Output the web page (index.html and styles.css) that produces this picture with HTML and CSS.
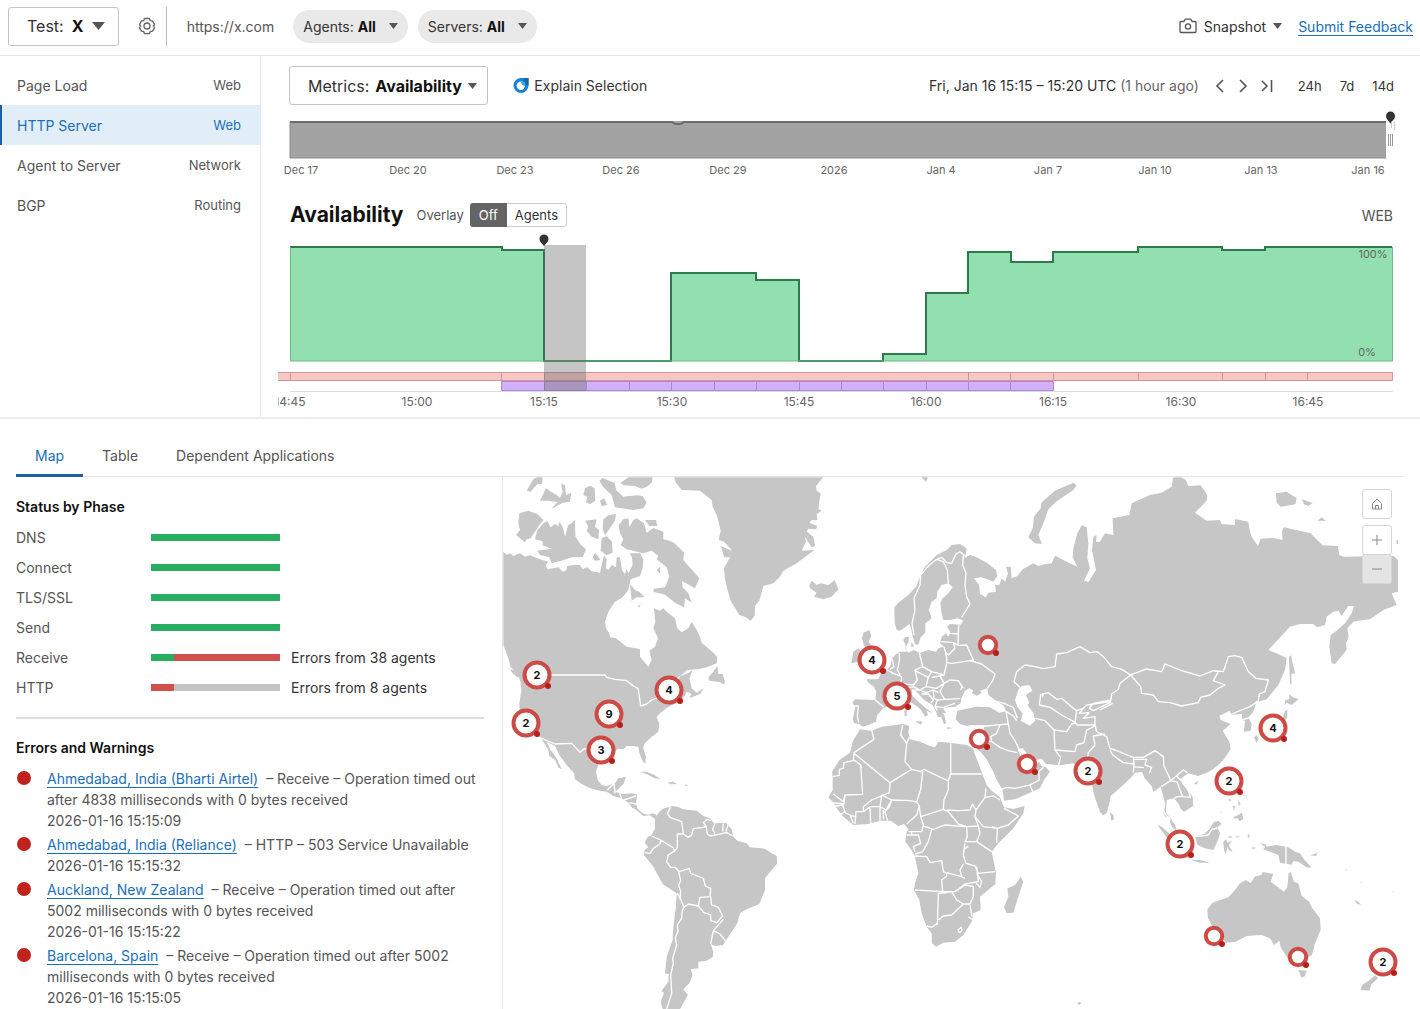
FILE: index.html
```html
<!DOCTYPE html>
<html lang="en">
  <head>
    <meta charset="UTF-8" />
    <meta name="viewport" content="width=device-width, initial-scale=1.0" />
    <title>HTTP Server - X</title>
    <link rel="stylesheet" href="styles.css">
  </head>
  <body>
    <header class="topbar">
      <label class="picker picker-test">
        <span>Test:</span>
        <select><option>X</option></select>
        <svg class="caret" width="13" height="8" viewBox="0 0 13 8"><path d="M0 0h13L6.5 8z" /></svg>
      </label>
      <button class="icon-btn gear" aria-label="Test settings">
        <svg width="18" height="18" viewBox="0 0 18 18" fill="none" stroke="#666" stroke-width="1.3" stroke-linejoin="round">
          <path d="M6.5 1.5h5l.8 2.2 2.3.4 2 3.5L15.200 9l1.400 1.600-2 3.500-2.300.4-.8 2.200h-5l-.8-2.200-2.300-.4-2-3.500L2.800 9 1.400 7.600l2-3.500 2.300-.4z" />
          <circle cx="9" cy="9" r="3" />
        </svg>
      </button>
      <span class="divider"></span>
      <span class="url">https://x.com</span>
      <label class="pill">
        <span>Agents:</span>
        <select><option>All</option></select>
        <svg class="caret" width="9" height="6" viewBox="0 0 9 6"><path d="M0 0h9L4.5 6z" /></svg>
      </label>
      <label class="pill">
        <span>Servers:</span>
        <select><option>All</option></select>
        <svg class="caret" width="9" height="6" viewBox="0 0 9 6"><path d="M0 0h9L4.5 6z" /></svg>
      </label>
      <div class="topbar-right">
        <button class="snapshot">
          <svg width="18" height="16" viewBox="0 0 18 16" fill="none" stroke="#555" stroke-width="1.3" stroke-linejoin="round">
            <path d="M1 4.500a1 1 0 0 1 1-1h3L6.200 1.200h5.600L13 3.500h3a1 1 0 0 1 1 1v9a1 1 0 0 1-1 1H2a1 1 0 0 1-1-1z" />
            <circle cx="9" cy="8.500" r="2.600" />
          </svg>
          Snapshot
          <svg class="caret" width="9" height="6" viewBox="0 0 9 6"><path d="M0 0h9L4.5 6z" /></svg>
        </button>
        <a class="link" href="#">Submit Feedback</a>
      </div>
    </header>

    <div class="upper">
      <nav class="sidebar">
        <a href="#"><span>Page Load</span><span class="kind">Web</span></a>
        <a href="#" class="active"><span>HTTP Server</span><span class="kind">Web</span></a>
        <a href="#"><span>Agent to Server</span><span class="kind">Network</span></a>
        <a href="#"><span>BGP</span><span class="kind">Routing</span></a>
      </nav>

      <main class="charts">
        <div class="toolbar">
          <label class="picker picker-metrics">
            <span>Metrics:</span>
            <select><option>Availability</option></select>
            <svg class="caret" width="9" height="6" viewBox="0 0 9 6"><path d="M0 0h9L4.5 6z" /></svg>
          </label>
          <button class="explain">
            <svg width="16" height="17" viewBox="0 0 16 17">
              <path d="M8 1a7.500 7.500 0 1 0 7.500 7.500V1z" fill="#1483d8" />
              <path d="M11 1h4.500v7.500c-2 0-4.500-3-4.500-7.500z" fill="#15679e" />
              <circle cx="7.800" cy="8.800" r="4.200" fill="#fff" />
              <path d="M8 5c0 2 2 4 4 4V5z" fill="#3aa6e8" />
            </svg>
            Explain Selection
          </button>
          <div class="range">
            <span>Fri, Jan 16 15:15 – 15:20 UTC <span class="muted">(1 hour ago)</span></span>
            <div class="steps">
              <button class="icon-btn" aria-label="Previous"><svg width="10" height="16" viewBox="0 0 10 16"><path d="M8 2 2 8l6 6" /></svg></button>
              <button class="icon-btn" aria-label="Next"><svg width="10" height="16" viewBox="0 0 10 16"><path d="m2 2 6 6-6 6" /></svg></button>
              <button class="icon-btn" aria-label="Latest"><svg width="12" height="16" viewBox="0 0 12 16"><path d="m1 3 5 5-5 5M10.500 2v12" /></svg></button>
            </div>
            <div class="spans">
              <button>24h</button>
              <button>7d</button>
              <button>14d</button>
            </div>
          </div>
        </div>

        <!-- 30 day overview -->
        <svg class="overview" viewBox="278 105 1126 75">
          <rect x="290" y="121" width="1096" height="37" fill="#a3a3a3" />
          <path d="M290 122H672l3 2h6l3-2H1386" fill="none" stroke="#6b6b6b" stroke-width="2" />
          <path d="M290 158H1386M290 122V158" stroke="#8c8c8c" />
          <path d="M1388.500 134v12M1390.500 134v12M1392.500 134v12" stroke="#999" />
          <path d="M1391.500 122v6M1394.500 122v8" stroke="#ccc" />
          <path d="M1390 124c0-3-4-4-4-8a4.500 4.500 0 0 1 9 0c0 4-4 5-5 8z" fill="#333" />
          <g class="tick tick-small">
            <text x="301" y="174">Dec 17</text>
            <text x="408" y="174">Dec 20</text>
            <text x="515" y="174">Dec 23</text>
            <text x="621" y="174">Dec 26</text>
            <text x="728" y="174">Dec 29</text>
            <text x="834" y="174">2026</text>
            <text x="941" y="174">Jan 4</text>
            <text x="1048" y="174">Jan 7</text>
            <text x="1155" y="174">Jan 10</text>
            <text x="1261" y="174">Jan 13</text>
            <text x="1368" y="174">Jan 16</text>
          </g>
        </svg>

        <div class="chart-head">
          <h1>Availability</h1>
          <span class="overlay-label">Overlay</span>
          <div class="toggle">
            <button class="on">Off</button>
            <button>Agents</button>
          </div>
          <span class="chart-type">WEB</span>
        </div>

        <svg class="chart" viewBox="278 230 1126 180">
          <path class="area" d="M290 361V247H502V250H544V361H671V273H756V280H799V361H883V354H926V293H968V252H1011V262H1053V252H1138V247H1222V250H1265V247H1392V361z" />
          <path class="area-line" d="M290 247H502V250H544V361H671V273H756V280H799V361H883V354H926V293H968V252H1011V262H1053V252H1138V247H1222V250H1265V247H1392" />
          <path d="M290.500 247V361H1392.500V247" fill="none" stroke="#6fb889" />
          <path d="M290 391.500H1393" stroke="#ddd" />
          <rect x="278" y="372" width="1115" height="9" fill="#f5c8c4" />
          <path class="alert-line" d="M278 372.500H1392.500V380.500H278M290.500 372v9M501.500 372v9M544.500 372v9M968.500 372v9M1010.500 372v9M1053.500 372v9M1138.500 372v9M1222.500 372v9M1265.500 372v9M1307.500 372v9" />
          <rect x="501" y="381" width="552" height="10" fill="#d3b0fa" />
          <path class="outage-line" d="M501.500 381.500H1053.500V390.500H501.500zM544.500 381v10M586.500 381v10M629.500 381v10M671.500 381v10M714.500 381v10M756.500 381v10M799.500 381v10M841.500 381v10M883.500 381v10M926.500 381v10M968.500 381v10M1010.500 381v10" />
          <rect x="544" y="245" width="42" height="146" fill="#666" fill-opacity=".38" />
          <path d="M544 247c0-3-4.500-4-4.500-8a4.500 4.500 0 0 1 9 0c0 4-4.500 5-4.500 8z" fill="#333" />
          <g class="tick">
            <text class="tick-small" x="1373" y="258">100%</text>
            <text class="tick-small" x="1367" y="356">0%</text>
            <text x="290" y="406">14:45</text>
            <text x="417" y="406">15:00</text>
            <text x="544" y="406">15:15</text>
            <text x="672" y="406">15:30</text>
            <text x="799" y="406">15:45</text>
            <text x="926" y="406">16:00</text>
            <text x="1053" y="406">16:15</text>
            <text x="1181" y="406">16:30</text>
            <text x="1308" y="406">16:45</text>
          </g>
        </svg>
      </main>
    </div>

    <div class="tabs">
      <a href="#" class="active">Map</a>
      <a href="#">Table</a>
      <a href="#">Dependent Applications</a>
    </div>

    <div class="lower">
      <section class="details">
        <h2>Status by Phase</h2>
        <table class="phases">
          <tr><th>DNS</th><td><div class="bar"><i class="ok" style="width: 100%"></i></div></td><td></td></tr>
          <tr><th>Connect</th><td><div class="bar"><i class="ok" style="width: 100%"></i></div></td><td></td></tr>
          <tr><th>TLS/SSL</th><td><div class="bar"><i class="ok" style="width: 100%"></i></div></td><td></td></tr>
          <tr><th>Send</th><td><div class="bar"><i class="ok" style="width: 100%"></i></div></td><td></td></tr>
          <tr><th>Receive</th><td><div class="bar"><i class="ok" style="width: 18%"></i><i class="bad" style="width: 82%"></i></div></td><td>Errors from 38 agents</td></tr>
          <tr><th>HTTP</th><td><div class="bar"><i class="bad" style="width: 18%"></i></div></td><td>Errors from 8 agents</td></tr>
        </table>
        <h2 class="errors-title">Errors and Warnings</h2>
        <ul class="errors">
          <li><a class="link" href="#">Ahmedabad, India (Bharti Airtel)</a> – Receive – Operation timed out after 4838 milliseconds with 0 bytes received<time>2026-01-16 15:15:09</time></li>
          <li><a class="link" href="#">Ahmedabad, India (Reliance)</a> – HTTP – 503 Service Unavailable<time>2026-01-16 15:15:32</time></li>
          <li><a class="link" href="#">Auckland, New Zealand</a> – Receive – Operation timed out after 5002 milliseconds with 0 bytes received<time>2026-01-16 15:15:22</time></li>
          <li><a class="link" href="#">Barcelona, Spain</a> – Receive – Operation timed out after 5002 milliseconds with 0 bytes received<time>2026-01-16 15:15:05</time></li>
        </ul>
      </section>

      <section class="map">
        <svg class="world" viewBox="0 0 901 532">
          <defs>
            <g id="pin">
              <circle r="12.500" fill="#fff" stroke="#cd4a45" stroke-width="4" />
              <circle cx="11" cy="11" r="3" fill="#b5201b" />
            </g>
            <g id="pin-small">
              <circle r="8.200" fill="#fff" stroke="#cd4a45" stroke-width="4" />
              <circle cx="8" cy="8" r="3" fill="#b5201b" />
            </g>
            <clipPath id="edge"><rect width="895" height="532" /></clipPath>
          </defs>

          <g clip-path="url(#edge)">
          <g class="land" transform="scale(.33333)">
            <!-- North America and Greenland -->
            <g transform="translate(-9 -21)">
              <path d="M10 245 20 255 30 250 40 258 60 250 75 260 90 256 120 268 145 275 138 285 142 298 175 292 188 305 200 300 202 288 225 284 240 285 248 298 262 292 275 304 300 308 306 280 312 256 320 268 318 295 325 300 335 285 348 292 350 262 360 262 366 300 374 312 380 298 385 310 398 285 396 262 388 250 420 250 430 268 428 295 420 318 392 328 385 360 368 382 345 395 325 425 315 455 318 475 328 490 330 502 348 505 380 530 420 537 420 560 445 590 455 570 448 542 465 530 474 505 460 475 466 455 462 415 480 422 490 415 500 425 525 445 532 475 545 487 565 475 575 455 590 480 600 500 605 518 640 548 652 562 650 580 620 592 595 598 562 600 540 618 560 612 578 600 568 625 575 655 590 668 612 655 600 672 568 685 575 672 560 665 545 692 510 708 495 718 480 730 470 742 478 760 475 785 450 805 432 822 430 835 438 862 434 882 425 868 418 848 415 830 398 828 380 828 370 838 355 836 335 850 320 850 298 875 288 905 293 930 305 945 320 948 345 940 355 925 378 920 372 940 358 955 345 965 368 972 395 970 411 974 408 1002 414 1018 428 1030 442 1034 460 1030 470 1035 465 1048 450 1036 430 1038 412 1022 400 1017 385 998 365 985 340 978 320 965 300 962 270 955 245 942 225 928 222 910 200 885 180 858 165 828 140 815 150 838 170 865 185 898 176 893 165 870 148 858 145 840 130 815 120 802 90 785 72 765 60 742 58 700 64 660 62 640 58 625 48 605 32 592 25 565 10 525z" />
              <path d="M58 130 85 122 112 132 130 150 118 165 105 185 92 205 80 208 75 217 48 195 60 180 55 160z" />
              <path d="M130 160 142 153 152 172 165 162 175 168 178 155 188 170 195 200 205 165 215 160 225 150 226 198 240 222 258 238 248 262 215 262 185 272 155 280 148 262 120 255 112 242 155 236 128 226 128 214 105 208 112 180z" />
              <path d="M80 62 100 28 110 22 128 22 126 42 112 42 92 65zM120 92 138 54 148 62 170 75 180 84 188 65 183 42 195 45 198 75 214 68 210 95 188 98 155 117 172 96 145 92zM250 75 255 55 270 47 284 55 286 92 270 103 258 97 262 80zM300 92 312 85 322 105 305 108z" />
              <path d="M298 32 308 24 345 40 348 60 370 80 410 76 428 78 440 98 430 115 400 120 345 112 335 75 310 52zM362 38 385 22 458 22 455 38 440 50 425 56 405 48 370 46z" />
              <path d="M255 152 290 148 285 170 297 180 295 208 275 200 260 182 265 170zM310 148 325 136 348 132 345 152 332 172 315 196 308 178zM305 205 320 198 336 215 338 248 320 256 302 242zM278 262 286 248 302 270 285 272z" />
              <path d="M356 165 370 148 385 145 388 172 400 150 410 145 432 160 440 188 460 174 490 185 490 208 508 212 522 218 552 248 550 270 598 325 585 355 545 332 548 352 565 370 575 398 555 385 552 412 525 398 495 374 460 365 462 356 495 352 508 320 500 292 470 268 475 258 455 242 430 250 380 238 362 225 370 208 360 190z" />
              <path d="M435 150 468 150 472 168 448 168zM390 342 405 360 418 366 435 382 410 382 395 392zM470 300 480 290 480 312zM412 410 422 402 418 412z" />
              <path d="M652 588 640 605 625 622 628 632 660 636 672 644 675 635 668 612 655 612zM30 598 42 600 62 618 52 622 38 610z" />
              <path d="M420 905 440 905 462 914 482 928 462 924 445 914zM502 938 520 935 530 942 512 943zM556 944 562 944 562 948 556 948zM430 872 436 872 436 880z" />
              <path d="M522 22 528 38 545 60 600 62 635 90 638 110 652 140 662 182 656 210 672 215 695 240 690 262 672 295 674 320 680 350 692 392 718 435 735 440 752 452 764 438 765 408 778 392 790 348 820 340 840 320 850 302 890 280 930 250 944 240 905 242 918 215 915 200 935 232 945 228 940 200 920 185 925 176 948 178 952 168 928 158 935 150 952 150 950 132 965 122 955 118 958 95 962 70 950 62 948 48 970 22z" />
              <path d="M663 228 695 242 690 262 672 262z" />
              <g class="border">
                <path d="M150 615H315L320 622 345 628 380 632 400 648 414 655 418 680 422 708 440 702 455 690 475 682M540 618 520 640M120 803 165 822 215 820 240 847 252 836 265 838M322 960 342 940M342 940 345 970M365 985 358 968M372 990 408 978M408 1002 388 998M472 740 482 735" />
              </g>
            </g>

            <!-- South America -->
            <g transform="translate(291 849)">
              <path d="M165 175 178 155 192 145 208 142 215 138 232 140 250 148 290 152 310 168 330 175 342 190 378 188 395 208 400 230 412 242 440 250 450 262 495 266 515 280 530 288 532 310 495 355 495 390 478 432 440 448 420 460 412 490 375 545 368 556 345 558 332 552 340 575 338 592 320 602 295 605 295 625 272 628 278 645 268 670 250 688 264 705 240 747 188 747 182 725 192 698 184 694 205 665 206 642 195 640 200 590 218 540 220 500 228 440 230 400 215 390 188 372 160 320 132 285 134 270 145 262 134 248 142 232 155 225 165 205z" />
              <g class="border">
                <path d="M212 142 202 160 210 172 245 185 250 222 264 232 275 225 280 206 310 202 318 198 322 222 332 228 380 218 398 228M332 182 322 178 310 188 318 198M345 190 338 208 345 220M370 190 368 215M384 195 378 215M250 222 232 222 232 262 225 272 218 262 182 240 155 228M182 240 180 252 160 265 150 280 135 278M225 272 205 285 200 305 212 322 225 322 238 335 268 325 272 340 310 355 316 378 332 385 330 410 300 412 295 438 265 432 252 442 240 412 242 395 236 375 242 362 236 335M332 410 335 435 355 442 368 468 350 488 332 482 332 465 312 458 295 438M232 400 240 415 252 442 246 455 245 475 232 495 234 515 226 532 230 555 218 595 220 610 212 645 215 700 200 747M370 478 340 512 332 552M340 512 360 522 376 542M100 145 112 158" />
              </g>
            </g>

            <!-- Europe and Asia -->
            <g transform="translate(891 -21)">
              <path d="M283 412 284 460 290 480 300 482 318 470 328 462 334 478 338 500 345 522 355 525 362 502 376 488 376 460 392 448 394 440 386 420 395 395 410 385 412 365 425 345 445 340 458 352 445 370 428 385 421 400 424 425 430 450 450 450 475 445 490 452 482 464 450 462 441 470 450 484 445 500 438 490 425 500 420 520 432 530 415 535 408 545 385 540 360 548 340 540 325 548 318 540 316 525 310 510 315 502 326 500 326 515 318 530 320 545 300 545 285 555 276 565 272 585 262 600 245 605 235 628 200 628 205 638 222 650 229 665 226 690 165 688 157 698 166 712 158 748 163 760 178 762 188 770 205 765 228 755 232 735 250 715 272 705 290 690 305 685 322 690 345 705 362 718 375 740 384 736 380 722 398 730 375 712 352 692 335 675 336 660 350 665 372 690 398 706 408 725 414 742 424 740 432 764 438 758 434 738 428 728 440 730 428 715 450 712 466 710 482 700 484 685 495 662 508 655 520 662 515 670 530 677 545 668 540 662 562 655 565 675 588 692 612 708 618 724 598 728 570 712 530 710 500 716 472 722 467 748 480 762 500 768 515 765 553 768 550 790 540 818 532 838 542 845 560 868 580 905 590 930 608 960 612 992 645 988 690 968 720 955 732 930 750 905 738 892 724 888 718 875 700 892 690 880 672 862 655 838 668 834 682 852 705 870 725 866 738 882 780 886 820 880 832 892 862 915 875 935 882 975 900 1025 908 1036 920 1030 928 1000 932 978 970 945 995 920 1005 908 1026 906 1034 925 1044 935 1056 950 1060 966 1082 950 1090 980 1096 1002 1093 1020 1100 1035 1115 1048 1128 1080 1118 1074 1110 1055 1112 1045 1098 1028 1100 990 1122 985 1138 1004 1140 1015 1152 1025 1180 1008 1178 980 1150 945 1140 928 1165 910 1195 918 1220 908 1240 898 1270 870 1292 838 1288 815 1268 782 1292 762 1262 750 1258 738 1288 722 1295 735 1326 732 1326 750 1335 752 1332 785 1352 782 1355 762 1345 742 1358 728 1370 697 1400 688 1435 645 1455 600 1460 565 1430 550 1405 540 1470 470 1500 462 1540 462 1552 472 1575 465 1580 440 1600 425 1615 422 1625 438 1645 408 1662 408 1655 430 1635 460 1610 482 1592 495 1588 530 1595 580 1605 582 1640 540 1638 520 1646 500 1642 475 1660 455 1690 450 1710 448 1750 420 1790 405 1775 370 1795 365 1795 270 1780 258 1630 260 1618 255 1614 228 1568 226 1532 190 1478 178 1452 172 1446 185 1448 210 1420 204 1382 206 1374 228 1355 200 1350 185 1345 155 1305 147 1305 165 1265 162 1260 150 1220 152 1185 128 1220 92 1222 75 1202 46 1165 48 1158 30 1142 22 1120 22 1115 50 1085 68 1050 75 995 100 988 135 938 145 940 195 915 190 900 215 888 215 890 195 880 200 876 240 888 300 866 335 852 332 870 295 862 265 865 220 860 172 845 166 832 190 820 235 818 262 832 290 800 275 780 265 765 257 755 280 735 282 715 288 700 280 668 298 652 318 635 325 632 290 618 290 624 310 615 335 605 325 598 345 585 345 588 365 565 368 558 382 540 372 537 345 522 325 545 322 580 335 592 318 588 300 560 278 530 262 510 255 496 262 500 235 480 222 455 225 440 240 410 255 375 290 360 320 348 350 325 375 295 398z" />
              <path d="M820 38 830 46 820 60 768 95 745 118 732 155 715 195 726 222 705 220 685 202 698 175 702 140 722 115 724 98 765 62z" />
              <path d="M28 345 36 332 50 345 62 340 85 345 104 330 115 358 95 380 70 388 42 380 50 368 30 355z" />
              <path d="M186 505 190 488 208 480 214 498 206 515 228 545 252 575 250 598 215 608 192 608 205 590 195 570 202 550 190 520zM154 580 160 545 175 535 184 545 178 575zM364 22 384 22 378 36zM334 515 342 528 334 532zM346 752 368 755 362 764zM313 720 320 718 320 738 314 738zM440 772 460 774 442 777z" />
              <path d="M1428 70 1460 65 1490 85 1486 103 1442 110 1430 98zM1506 88 1538 99 1525 108 1512 103zM1553 152 1565 142 1578 153zM1790 210 1796 210 1796 222 1790 222zM1467 562 1473 555 1480 590 1486 610 1474 612 1475 645 1470 640z" />
              <path d="M1467 672 1478 682 1496 688 1475 705 1460 698 1453 706 1456 690 1468 688zM1455 722 1462 720 1462 742 1450 760 1445 790 1410 795 1385 797 1440 775zM1362 802 1370 795 1376 806 1370 820zM1386 796 1402 793 1390 802z" />
              <path class="water" d="M645 690 655 660 665 648 688 645 697 662 678 675 688 698 682 705 700 728 706 752 690 767 662 752 668 730 652 710z" />
              <path class="water" d="M725 672 733 668 728 684z" />
              <g class="border">
                <path d="M342 495 336 460 345 420 342 385 360 345 362 315 385 288 410 268 430 275 442 300 445 340M410 268 425 262 440 278 455 280 468 252 480 245 492 255 500 262M490 256 488 285 498 310 495 345 500 380 510 402 485 442" />
                <path d="M446 490 475 492 476 464M424 515 460 518 475 526 500 525 510 548 520 570 510 572 455 580 440 578 440 562 432 530M475 492 474 526M460 518 465 535 445 555 438 548M358 548 368 590 395 605 432 615 440 580M298 548 298 575 292 600 305 625 302 640 340 645 352 630 345 600 368 590M345 602 385 622 395 605M385 622 378 650 410 655 432 640 420 618 395 622M418 618 432 615M432 640 450 630 475 632 490 655M475 632 486 650 482 660M432 640 420 665 434 688 480 686M510 572 545 582 585 612 578 632 562 655M262 600 280 610 305 620M276 565 282 590 270 598M226 690 252 712M160 708 175 708 172 740 176 758M302 640 320 655 340 650 360 660 378 650M335 660 360 660 378 668 400 660 415 668M365 672 385 672 400 690 392 700M400 660 402 685 412 690 434 688M412 690 405 710 430 712 465 700M405 710 412 722M582 692 612 700 640 712 652 745M618 724 640 738 650 752M618 724 622 745 625 765M530 768 562 768 600 764 625 762 630 790 645 812 658 840M600 764 590 790 572 800 575 815 600 832 625 842 652 848M545 808 558 812 575 815M540 830 555 815" />
                <path d="M660 652 642 635 650 605 675 585 705 590 730 596 765 590 770 552 800 548 840 530 870 548 892 545 910 560 935 590 965 598 992 615 960 640 955 658 935 672 932 695 860 705 850 715 830 722 812 708 785 685 770 688 745 668 722 674 718 705 750 712 790 738 828 758M932 690 880 700 868 715 880 722 932 697M830 722 825 758 832 765 885 765M850 715 838 730 868 728M868 728 850 745 885 740 885 765M706 745 735 752 762 780 765 840 782 862 775 888M762 780 800 785 815 762 828 758M768 840 825 845 830 825 852 818 860 780 885 768M885 765 890 785 920 800 930 835 945 840 1000 862 1002 882 970 878 938 855 930 840M915 792 880 798 885 825 865 848 862 868 850 880M1000 862 1030 862 1065 842 1090 860 1092 888 1105 915 1112 932 1150 900 1162 908M1002 868 1040 868 1035 885 1055 892 1048 910M1002 882 1000 908M1002 890 1032 893M1112 932 1084 950M1112 932 1132 936 1138 955 1148 980 1172 982M1122 985 1132 980 1148 980M1130 918 1160 950 1172 982" />
                <path d="M992 615 1040 597 1085 605 1095 582 1145 602 1200 618 1240 602 1255 605 1240 632 1275 645 1255 655 1230 675 1202 682 1195 698 1145 708 1110 698 1075 695 1060 675 1025 670 1022 650 992 615M1240 602 1270 605 1285 560 1305 557 1325 562 1345 605 1368 625 1405 630 1395 665 1378 672 1374 697M1290 735 1320 722 1350 710 1372 695M1326 750 1350 742M605 958 620 952 645 955 690 945 718 930 716 905 730 892M690 945 698 965M655 838 665 862M938 700 900 720M1112 1045 1126 1050" />
              </g>
            </g>

            <!-- Africa -->
            <g transform="translate(891 669)">
              <path d="M180 88 195 90 215 92 245 80 310 72 328 78 325 95 330 118 360 125 390 138 405 142 415 125 450 128 500 135 518 145 535 190 552 235 560 255 575 272 600 292 612 322 640 327 674 318 670 340 640 385 595 430 575 455 580 480 588 520 586 552 540 590 542 630 520 640 515 665 490 705 465 725 430 728 408 740 396 730 395 700 380 680 365 640 358 600 342 570 345 550 355 520 345 470 340 458 316 425 320 395 325 388 312 372 295 378 272 362 240 362 205 372 160 375 130 350 110 325 98 305 85 292 98 270 98 230 96 215 118 180 150 158 158 125z" />
              <path d="M662 530 670 545 655 590 640 638 620 640 612 622 625 590 622 565 645 555zM832 910 838 905 844 910 838 915z" />
              <g class="border">
                <path d="M215 90 222 118 185 142 162 158 160 182 132 188 130 205 118 208 118 226 98 230M162 160 270 248 335 208 362 215 372 208 445 243 452 222 545 222M452 222V126M335 208 315 185 320 130 302 105 308 75M320 130 328 112M162 180 182 195 188 283 135 285 130 305 100 282M182 197 185 205M270 248 268 278 215 300 190 320 190 335 168 335 165 372M135 285 132 312 92 308M90 315 112 318M112 318 128 315 135 335 120 345M130 335 150 345 160 370M148 345 165 350M190 335 210 320 240 320 245 285 275 300 258 330 240 320M210 320 212 370M240 320 240 362M250 330 250 358M275 300 268 320 255 335 262 362M275 300 330 302 350 306 362 268 368 215M350 306 358 318 350 345 320 372M358 318 362 350 430 328 432 300 445 270 445 243M362 350 370 375 365 395 325 395M370 378 400 388 435 375 495 380M430 328 445 335 475 372 500 380 535 378 525 350 528 330 518 312 510 330 475 332 440 330M528 330 555 292 558 265M555 292 580 288 600 300M525 350 550 380 592 385 625 375 655 348 612 325M592 385 590 428M592 385 575 380M535 378 540 400 530 425 575 455M500 380 502 410 495 425 530 425M495 430 490 465 498 490 525 498 535 520 585 515M495 445 505 440M395 388 385 425 368 455 345 462M320 405 335 405 335 395M335 405 355 405 362 430 340 440 345 455M345 468 380 470 390 488 425 482 430 515 440 520 440 528 425 540 428 575 345 570M440 518 485 530 480 510 490 492M485 530 495 535M428 575 465 575 495 552 535 545 530 500M530 520 545 545 540 562 528 548M412 675 415 580 440 578 455 575 470 600 490 612 455 645 430 648 415 660M412 670 395 682 380 678M465 575 495 555 520 560 520 590 510 612 490 612M510 615 516 650M505 650 515 658" />
                <path d="M474 690 484 682 486 692 478 698z" />
              </g>
            </g>

            <!-- Oceania and the islands of south east Asia -->
            <g transform="translate(1731 669)">
              <path d="M384 655 382 628 398 608 445 592 465 570 480 550 498 540 512 550 524 530 545 524 548 516 580 522 572 545 612 575 622 562 626 520 632 516 642 545 655 550 665 588 688 605 695 622 720 655 722 690 705 730 696 765 680 775 655 792 625 778 602 742 598 722 582 735 570 715 545 705 500 708 465 726 438 728 415 700 400 690 392 668z" />
              <path d="M655 810 680 812 675 828 665 834zM886 825 894 835 875 852 868 872 842 870 846 856 866 842zM908 760 925 775 940 780 925 810 905 822 900 790z" />
              <path d="M232 374 245 380 262 395 300 430 330 475 312 470 280 440 255 405zM332 480 360 480 392 488 360 488zM270 360 285 372 290 392 278 382zM248 340 262 350 256 350z" />
              <path d="M346 412 372 402 388 388 402 366 415 363 425 372 412 382 420 400 415 418 400 450 375 445 352 435zM430 425 438 418 442 428 455 422 446 436 458 456 448 452 442 440 438 464 432 450zM465 410 480 408 470 413zM440 412 455 408 455 413zM502 405 508 402 508 418zM510 444 526 442 524 447z" />
              <path d="M540 430 556 432 560 440 590 435 625 442 645 455 660 460 672 478 694 502 682 503 655 485 640 483 635 494 600 488 595 465 570 455 550 448 555 440zM690 466 705 462 714 456 708 468zM460 352 475 345 486 338 490 358 478 364 474 354 462 356zM458 318 466 318 462 332zM475 300 482 312 476 318zM446 296 456 300 448 304zM420 338 428 332 422 340z" />
              <path d="M90 336 100 345 102 358 94 362zM342 250 354 244 350 254zM822 600 832 604 844 614 832 612zM796 508 804 510 798 512zM840 546 845 546 845 550zM938 574 944 576 938 577z" />
              <g class="border"><path d="M618 440V492M350 410 385 405 395 388 412 384" /></g>
            </g>
          </g>
          </g>

          <g class="pins">
            <g transform="translate(34 198)"><use href="#pin" /><text y="4">2</text></g>
            <g transform="translate(23 246)"><use href="#pin" /><text y="4">2</text></g>
            <g transform="translate(106 237)"><use href="#pin" /><text y="4">9</text></g>
            <g transform="translate(98 273)"><use href="#pin" /><text y="4">3</text></g>
            <g transform="translate(166 213)"><use href="#pin" /><text y="4">4</text></g>
            <g transform="translate(369 183)"><use href="#pin" /><text y="4">4</text></g>
            <g transform="translate(394 219)"><use href="#pin" /><text y="4">5</text></g>
            <g transform="translate(585 294)"><use href="#pin" /><text y="4">2</text></g>
            <g transform="translate(770 251)"><use href="#pin" /><text y="4">4</text></g>
            <g transform="translate(726 304)"><use href="#pin" /><text y="4">2</text></g>
            <g transform="translate(677 367)"><use href="#pin" /><text y="4">2</text></g>
            <g transform="translate(880 485)"><use href="#pin" /><text y="4">2</text></g>
            <use href="#pin-small" x="485" y="168" />
            <use href="#pin-small" x="476" y="262" />
            <use href="#pin-small" x="524" y="287" />
            <use href="#pin-small" x="711" y="459" />
            <use href="#pin-small" x="795" y="480" />
          </g>
        </svg>

        <div class="map-tools">
          <button aria-label="Reset view"><svg width="12" height="12" viewBox="0 0 12 12"><path d="M1.500 5.500 6 1l4.500 4.500V11h-9zM4.500 11V7.500h3V11" /></svg></button>
          <div class="zoom">
            <button aria-label="Zoom in"><svg width="12" height="12" viewBox="0 0 12 12"><path d="M1 6h10M6 1v10" /></svg></button>
            <button class="off" aria-label="Zoom out"><svg width="12" height="12" viewBox="0 0 12 12"><path d="M1 6h10" /></svg></button>
          </div>
        </div>
      </section>
    </div>
  </body>
</html>
```
FILE: styles.css
```css
* {
  box-sizing: border-box;
}
body {
  margin: 0;
  font-family: Inter, "Liberation Sans", sans-serif;
  font-size: 14px;
  color: #555;
  background: #fff;
}
button,
select {
  font: inherit;
  color: inherit;
  background: none;
  border: 0;
  padding: 0;
  cursor: pointer;
}
select {
  appearance: none;
  color: #111;
  font-weight: 700;
}
svg {
  display: block;
}
.caret {
  fill: #555;
}
.link {
  color: #1a6fb8;
  text-decoration: underline;
  text-underline-offset: 3px;
}
.icon-btn {
  display: flex;
}

/* top bar */
.topbar {
  display: flex;
  align-items: center;
  height: 56px;
  padding: 0 7px 3px 8px;
  border-bottom: 1px solid #e6e6e6;
}
.picker {
  display: flex;
  align-items: center;
  height: 39px;
  border: 1px solid #c4c4c4;
  border-radius: 3px;
  font-size: 16px;
  color: #333;
}
.picker-test {
  gap: 8px;
  padding: 0 13px 0 18px;
}
.picker-metrics {
  gap: 6px;
  padding: 0 10px 0 18px;
}
.gear {
  margin-left: 19px;
}
.divider {
  width: 1px;
  height: 39px;
  margin: 0 20px 0 10px;
  background: #bbb;
}
.url {
  margin-right: 19px;
}
.pill {
  display: flex;
  align-items: center;
  gap: 4px;
  height: 33px;
  margin-right: 10px;
  padding: 0 10px;
  border-radius: 17px;
  background: #e9e9e9;
  color: #333;
}
.pill .caret {
  margin-left: 8px;
}
.topbar-right {
  display: flex;
  align-items: center;
  gap: 16px;
  margin-left: auto;
}
.snapshot {
  display: flex;
  align-items: center;
  gap: 7px;
  color: #333;
}

/* test list and charts */
.upper {
  display: flex;
  border-bottom: 2px solid #ececec;
}
.sidebar {
  width: 261px;
  padding-top: 9px;
  border-right: 1px solid #e6e6e6;
}
.sidebar a {
  display: flex;
  align-items: center;
  justify-content: space-between;
  height: 40px;
  padding: 0 19px 0 17px;
  color: #555;
  text-decoration: none;
}
.sidebar .active {
  background: #e1eef8;
  box-shadow: inset 2px 0 #1a5fa8;
  color: #1a6fb8;
}
.kind {
  font-size: 13px;
}
.charts {
  flex: 1;
  min-width: 0;
  padding: 10px 16px 7px 17px;
}
.toolbar {
  display: flex;
  align-items: center;
  padding: 0 10px 0 11px;
}
.explain {
  display: flex;
  align-items: center;
  gap: 5px;
  margin-left: 25px;
  color: #333;
}
.range {
  display: flex;
  align-items: center;
  margin-left: auto;
  color: #333;
}
.muted {
  color: #666;
}
.steps {
  display: flex;
  gap: 13px;
  margin: 0 25px 0 16px;
}
.steps svg {
  fill: none;
  stroke: #555;
  stroke-width: 1.6;
}
.spans {
  display: flex;
  gap: 18px;
  font-size: 13px;
}
.overview,
.chart {
  width: 100%;
  height: auto;
}
.chart-head {
  display: flex;
  align-items: center;
  height: 30px;
  margin-top: 20px;
  padding: 0 11px 0 12px;
}
h1 {
  margin: 0 13px 0 0;
  font-size: 21px;
  line-height: 24px;
  font-weight: 700;
  color: #111;
}
.overlay-label {
  margin-right: 6px;
  font-size: 13px;
}
.toggle {
  display: flex;
  height: 24px;
  border: 1px solid #ccc;
  border-radius: 3px;
  font-size: 13px;
  color: #333;
}
.toggle button {
  padding: 0 8px;
}
.toggle .on {
  margin: -1px 0 -1px -1px;
  padding: 0 9px;
  border-radius: 3px 0 0 3px;
  background: #646464;
  color: #fff;
}
.chart-type {
  margin-left: auto;
}
.area {
  fill: #92e0b0;
}
.area-line {
  fill: none;
  stroke: #2f7a4d;
  stroke-width: 2;
}
.alert-line {
  fill: none;
  stroke: #d99391;
}
.outage-line {
  fill: none;
  stroke: #ae86d6;
}
.tick {
  font-size: 12px;
  fill: #666;
  text-anchor: middle;
}
.tick-small {
  font-size: 11px;
}

/* tabs */
.tabs {
  display: flex;
  height: 58px;
  margin: 0 16px;
  border-bottom: 1px solid #e6e6e6;
}
.tabs a {
  display: flex;
  align-items: center;
  padding: 18px 19px 0;
  margin-bottom: -1px;
  border-bottom: 3px solid transparent;
  color: #555;
  text-decoration: none;
}
.tabs .active {
  border-color: #1a5fa8;
  color: #1a6fb8;
}

/* status column and map */
.lower {
  display: flex;
  margin: 0 16px;
}
.details {
  width: 486px;
  flex-shrink: 0;
  padding-right: 18px;
}
h2 {
  margin: 20px 0 5px;
  font-size: 14px;
  line-height: 20px;
  font-weight: 600;
  color: #111;
}
.phases {
  width: 100%;
  margin-bottom: 15px;
  border-collapse: collapse;
}
.phases th,
.phases td {
  height: 30px;
  padding: 0;
  text-align: left;
  font-weight: 400;
}
.phases th {
  width: 135px;
}
.phases td:nth-child(2) {
  width: 140px;
}
.phases td {
  color: #333;
}
.bar {
  display: flex;
  width: 129px;
  height: 7px;
  background: #c4c4c4;
}
.ok {
  background: #27ae60;
}
.bad {
  background: #d2504b;
}
.errors-title {
  margin: 0 0 10px;
  padding-top: 19px;
  border-top: 2px solid #ddd;
}
.errors {
  margin: 0;
  padding: 0;
  list-style: none;
  line-height: 21px;
}
.errors li {
  position: relative;
  margin-bottom: 3px;
  padding-left: 31px;
}
.errors li::before {
  content: "";
  position: absolute;
  left: 1px;
  top: 3px;
  width: 14px;
  height: 14px;
  border-radius: 50%;
  background: #bf231c;
}
.errors li:last-child {
  margin-bottom: 0;
}
.errors .link {
  margin-right: 4px;
}
.errors time {
  display: block;
}
.map {
  position: relative;
  flex: 1;
  min-width: 0;
  border-left: 1px solid #e6e6e6;
}
.world {
  width: 100%;
  height: auto;
}
.land {
  fill: #c6c6c6;
}
.water {
  fill: #fff;
}
.border {
  fill: none;
  stroke: #fff;
  stroke-width: 4;
  stroke-linejoin: round;
}
.pins {
  font-size: 11px;
  font-weight: 700;
  fill: #111;
  text-anchor: middle;
}
.map-tools {
  position: absolute;
  top: 12px;
  right: 12px;
  display: flex;
  flex-direction: column;
  gap: 6px;
}
.map-tools button {
  display: flex;
  align-items: center;
  justify-content: center;
  width: 30px;
  height: 30px;
  border: 1px solid #d5d5d5;
  border-radius: 3px;
  background: #fff;
}
.map-tools svg {
  fill: none;
  stroke: #888;
}
.zoom button + button {
  margin-top: -1px;
}
.map-tools .off {
  background: #e4e4e4;
}
```
